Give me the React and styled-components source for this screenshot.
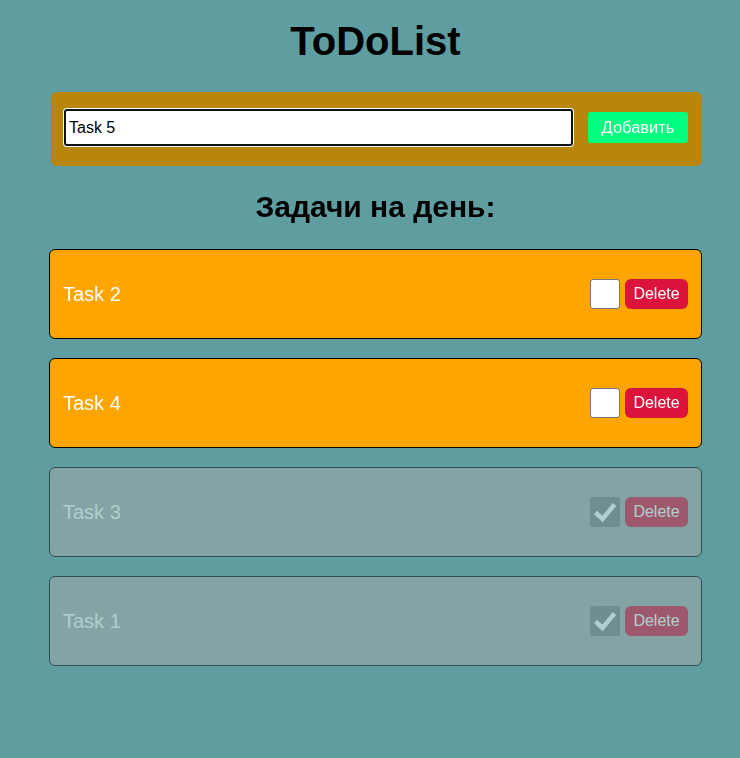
import { useState } from "react";
import styled, { createGlobalStyle } from "styled-components";

const GlobalStyle = createGlobalStyle`
  body {
    margin: 0;
    background: cadetblue;
    font-family: "Liberation Sans", Arial, sans-serif;
  }
`;

const initialTasks = [
  { id: 2, text: "Task 2", done: false },
  { id: 4, text: "Task 4", done: false },
  { id: 3, text: "Task 3", done: true },
  { id: 1, text: "Task 1", done: true },
];

export default function App() {
  const [value, setValue] = useState("Task 5");
  const [tasks, setTasks] = useState(initialTasks);

  const toggle = (id) =>
    setTasks(tasks.map((t) => (t.id === id ? { ...t, done: !t.done } : t)));

  return (
    <Wrapper>
      <GlobalStyle />
      <Title>ToDoList</Title>
      <AddForm onSubmit={(e) => e.preventDefault()}>
        <TaskInput
          autoFocus
          value={value}
          onChange={(e) => setValue(e.target.value)}
        />
        <AddButton type="submit">Добавить</AddButton>
      </AddForm>
      <Subtitle>Задачи на день:</Subtitle>
      <List>
        {tasks.map((t) => (
          <Card key={t.id} $done={t.done}>
            <span>{t.text}</span>
            <Controls>
              <Check $checked={t.done} onClick={() => toggle(t.id)}>
                {t.done && (
                  <svg width="24" height="24" viewBox="0 0 24 24">
                    <path
                      d="M2.5 12.5 L9.5 19 L21.5 4.5"
                      fill="none"
                      stroke="#fff"
                      strokeWidth="4.5"
                    />
                  </svg>
                )}
              </Check>
              <DeleteButton
                type="button"
                onClick={() => setTasks(tasks.filter((x) => x.id !== t.id))}
              >
                Delete
              </DeleteButton>
            </Controls>
          </Card>
        ))}
      </List>
    </Wrapper>
  );
}

const Wrapper = styled.div`
  width: 653px;
  margin-left: 49px;
  padding-top: 18px;
`;

const Title = styled.h1`
  margin: 0;
  text-align: center;
  font-size: 40px;
  line-height: 46px;
  font-weight: bold;
`;

const AddForm = styled.form`
  margin: 28px 0 0 2px;
  width: 651px;
  height: 74px;
  box-sizing: border-box;
  background: darkgoldenrod;
  border-radius: 6px;
  padding: 0 14px 3px 13px;
  display: flex;
  align-items: center;
  gap: 15px;
`;

const TaskInput = styled.input`
  flex: 1;
  height: 37px;
  box-sizing: border-box;
  border: 2px solid #111;
  border-radius: 3px;
  box-shadow: 0 0 0 1px #fff;
  outline: none;
  padding: 0 3px;
  font-family: inherit;
  font-size: 16px;
  color: #000;
`;

const AddButton = styled.button`
  width: 100px;
  height: 31px;
  border: none;
  border-radius: 3px;
  background: springgreen;
  color: #fff;
  font-family: inherit;
  font-size: 16.5px;
  padding: 0;
`;

const Subtitle = styled.h2`
  margin: 23px 0 0;
  text-align: center;
  font-size: 30px;
  line-height: 36px;
  font-weight: bold;
`;

const List = styled.div`
  margin-top: 24px;
  display: flex;
  flex-direction: column;
  gap: 19px;
`;

const Card = styled.div`
  height: 90px;
  box-sizing: border-box;
  border: 1px solid #000;
  border-radius: 6px;
  background: ${(p) => (p.$done ? "darkgray" : "orange")};
  opacity: ${(p) => (p.$done ? 0.5 : 1)};
  padding: 0 13px;
  display: flex;
  align-items: center;
  justify-content: space-between;
  color: #fff;
  font-size: 20px;
`;

const Controls = styled.div`
  display: flex;
  align-items: center;
  gap: 5px;
`;

const Check = styled.div`
  width: 30px;
  height: 30px;
  box-sizing: border-box;
  border-radius: 3px;
  border: ${(p) => (p.$checked ? "none" : "1px solid #767676")};
  background: ${(p) => (p.$checked ? "#808080" : "#fff")};
  display: flex;
  align-items: center;
  justify-content: center;
`;

const DeleteButton = styled.button`
  width: 63px;
  height: 30px;
  border: none;
  border-radius: 6px;
  background: crimson;
  color: #fff;
  font-family: inherit;
  font-size: 16px;
  padding: 0;
`;
